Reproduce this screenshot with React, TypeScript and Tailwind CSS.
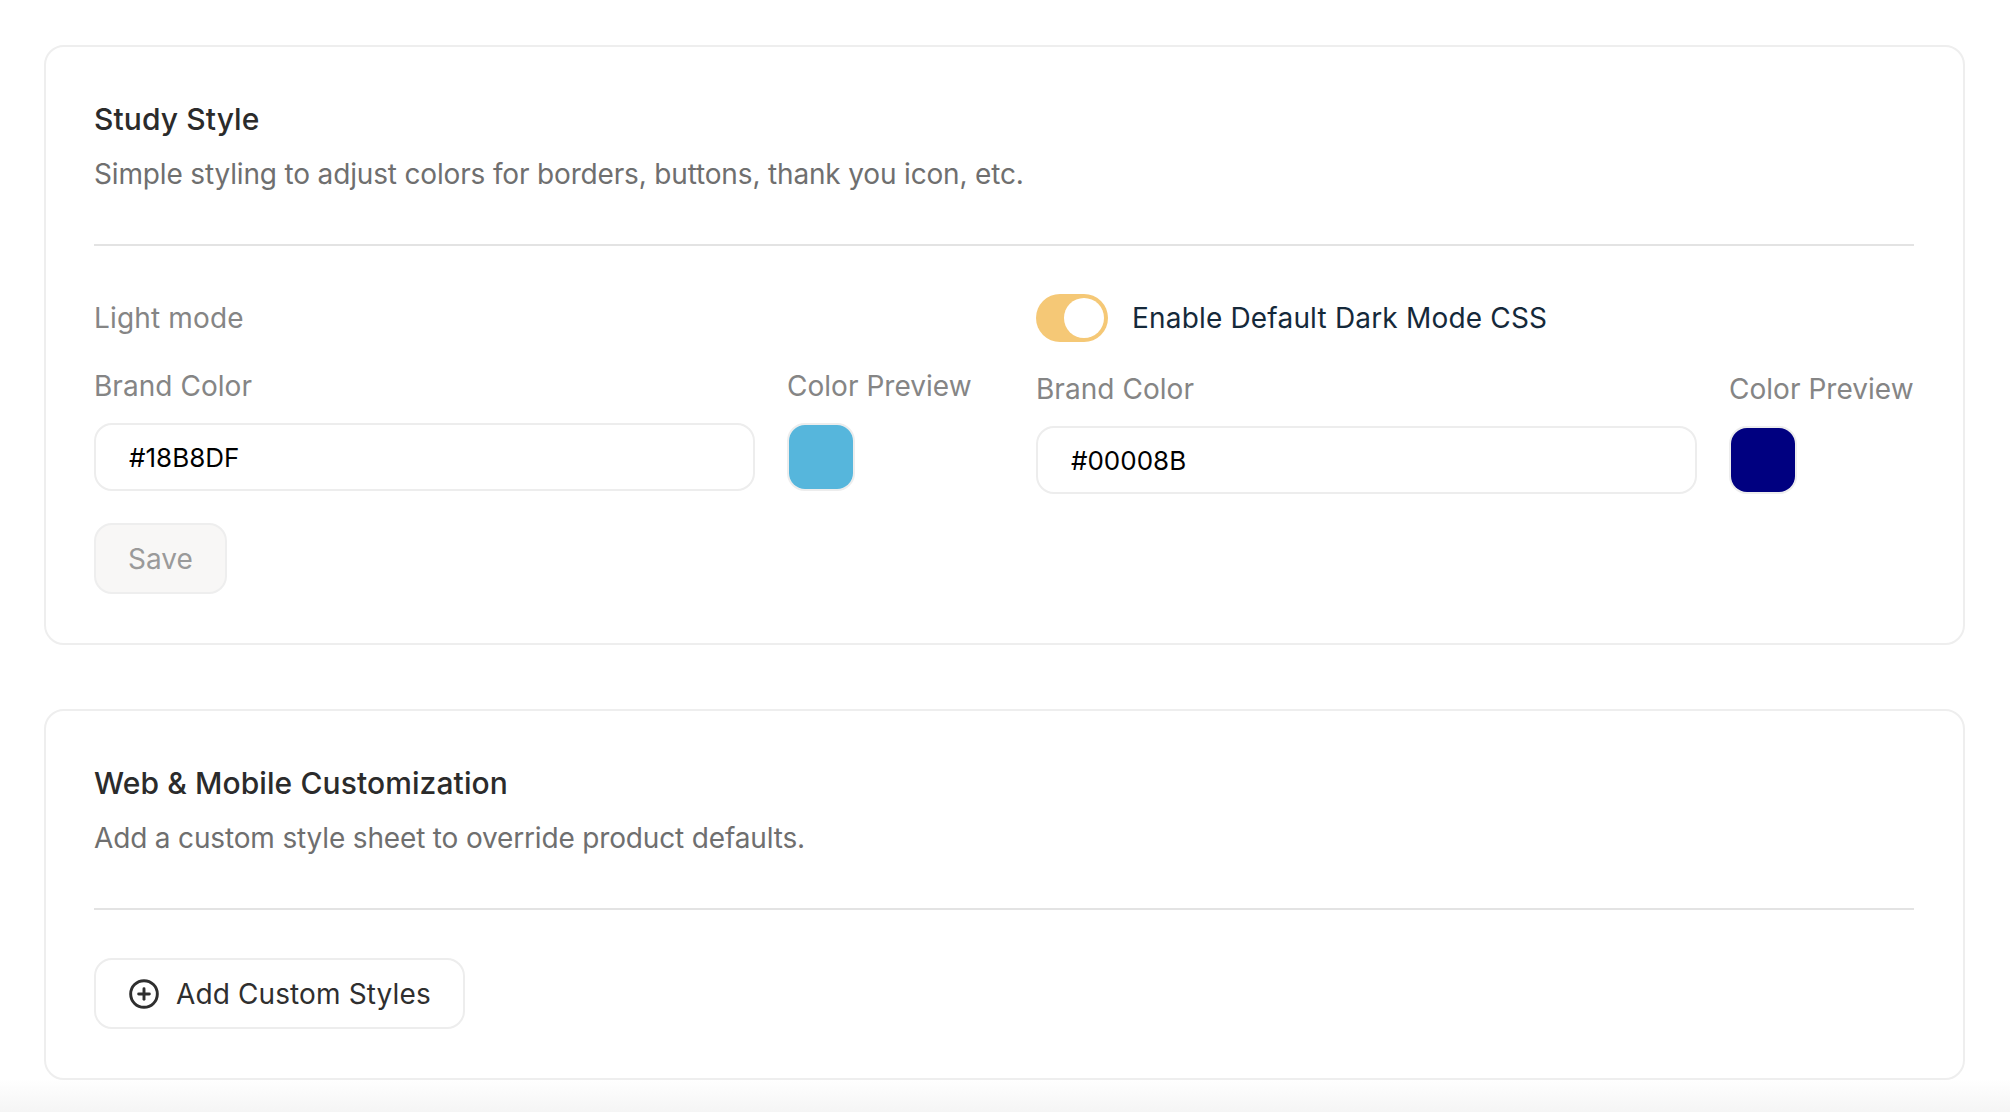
import { CirclePlus } from "lucide-react";

function ColorRow({ value, color }: { value: string; color: string }) {
  return (
    <div className="mt-[27px] flex gap-[32px]">
      <div className="flex-1">
        <label className="block text-[28px] leading-[40px] tracking-[0.05px] text-[#858585]">Brand Color</label>
        <input
          readOnly
          value={value}
          className="mt-[17px] block h-[68px] w-full rounded-[18px] border-2 border-[#ededed] bg-white px-[33px] text-[26px] text-black outline-none"
        />
      </div>
      <div className="w-[185px] shrink-0">
        <label className="block text-[28px] leading-[40px] tracking-[0.03px] text-[#858585]">Color Preview</label>
        <div className="mt-[17px] h-[68px] w-[68px] rounded-[18px] border-2 border-[#ededed]">
          <div className="h-full w-full rounded-[16px]" style={{ backgroundColor: color }} />
        </div>
      </div>
    </div>
  );
}

function Card({ title, desc, children, className }: { title: string; desc: string; children: React.ReactNode; className: string }) {
  return (
    <section className={"rounded-[20px] border-2 border-[#eeeeee] bg-white pt-[52px] pr-[49px] pl-[48px] " + className}>
      <h2 className="text-[30px] leading-[40px] font-medium tracking-[0.1px] text-[#2b2b2b]">{title}</h2>
      <p className="mt-[15px] text-[28px] leading-[40px] tracking-[-0.16px] text-[#6f6f6f]">{desc}</p>
      <div className="mt-[50px] h-[2px] bg-[#e3e3e3]" />
      {children}
    </section>
  );
}

export default function App() {
  return (
    <div className="flex min-h-[1112px] flex-col gap-[64px] bg-gradient-to-b from-white from-[97%] to-[#f5f5f5] pt-[45px] pr-[45px] pl-[44px] font-['Inter',sans-serif]">
      <Card title="Study Style" desc="Simple styling to adjust colors for borders, buttons, thank you icon, etc." className="h-[600px]">
        <div className="mt-[48px] grid grid-cols-2 gap-[64px]">
          <div>
            <div className="flex h-[48px] items-center text-[28px] tracking-[0.15px] text-[#858585]">Light mode</div>
            <div className="mt-[-3px]">
              <ColorRow value="#18B8DF" color="#56B6DC" />
            </div>
            <button className="mt-[32px] h-[71px] w-[133px] rounded-[18px] border-2 border-[#eeeeee] bg-[#f8f7f6] text-[28px] text-[#9a9a9a]">
              Save
            </button>
          </div>
          <div>
            <div className="flex h-[48px] items-center gap-[24px]">
              <div className="flex h-[48px] w-[72px] items-center justify-end rounded-full bg-[#f5c876] p-[4px]">
                <div className="h-[40px] w-[40px] rounded-full bg-white" />
              </div>
              <span className="text-[28px] tracking-[0.18px] text-[#15293a]">Enable Default Dark Mode CSS</span>
            </div>
            <ColorRow value="#00008B" color="#000080" />
          </div>
        </div>
      </Card>
      <Card title="Web &amp; Mobile Customization" desc="Add a custom style sheet to override product defaults." className="h-[371px]">
        <button className="mt-[48px] flex h-[71px] w-[371px] items-center gap-[16px] rounded-[18px] border-2 border-[#ededed] bg-white pl-[32px] text-[28px] tracking-[0.12px] text-[#2f2f2f]">
          <CirclePlus size={32} strokeWidth={2.2} />
          Add Custom Styles
        </button>
      </Card>
    </div>
  );
}
